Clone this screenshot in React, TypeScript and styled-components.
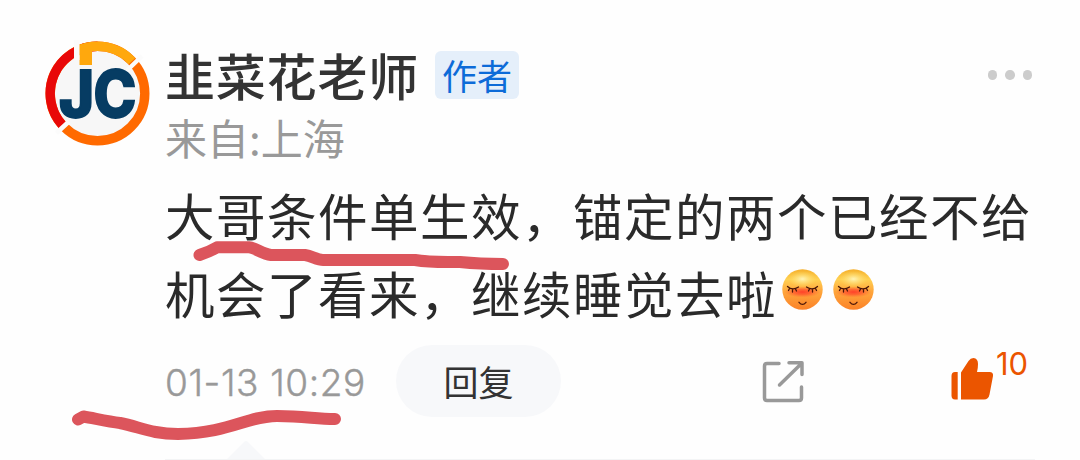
import React from "react";
import styled, { createGlobalStyle } from "styled-components";

const GlobalStyle = createGlobalStyle`
  *, *::before, *::after { box-sizing: border-box; }
  body { margin: 0; background: #fefefe; }
`;

const cjk = `"Noto Sans CJK SC", "Noto Sans", sans-serif`;

const Page = styled.main`
  position: relative;
  width: 1080px;
  height: 460px;
  overflow: hidden;
  display: flex;
  padding: 40px 45px 0 45px;
  background: #fefefe;
  font-family: ${cjk};
`;

const Avatar = styled.svg`
  flex: none;
  width: 106px;
  height: 106px;
  margin-right: 14px;
`;

const Comment = styled.article`
  width: 870px;
  flex: none;
`;

const Header = styled.header`
  display: flex;
  align-items: center;
  height: 70px;
`;

const UserName = styled.h1`
  margin: 0;
  padding-bottom: 2px;
  font-size: 50px;
  letter-spacing: 0.8px;
  line-height: 68px;
  font-weight: 500;
  color: #333;
`;

const AuthorBadge = styled.span`
  width: 84px;
  height: 48px;
  margin-left: 16px;
  border-radius: 6px;
  background: #e5effa;
  color: #0d6bd8;
  font-size: 35px;
  line-height: 47px;
  text-align: center;
`;

const MoreButton = styled.span`
  display: flex;
  gap: 8px;
  margin: 0 3px 0 auto;
`;

const Dot = styled.i`
  width: 9.5px;
  height: 9.5px;
  border-radius: 50%;
  background: #ccc;
`;

const Location = styled.div`
  height: 66px;
  font-size: 42px;
  line-height: 54px;
  color: #999;
`;

const Body = styled.p`
  margin: 0;
  font-size: 49.5px;
  letter-spacing: 1.5px;
  line-height: 78px;
  color: #2a2a2a;
  white-space: nowrap;
`;

const EmojiIcon = styled.svg`
  width: 41px;
  height: 41px;
  margin: 0 5px;
  vertical-align: 4px;
`;

const Footer = styled.footer`
  display: flex;
  align-items: center;
  height: 72px;
  margin-top: 13px;
`;

const Time = styled.time`
  width: 231px;
  padding-top: 3px;
  font-family: Inter, sans-serif;
  font-weight: 300;
  font-size: 37px;
  letter-spacing: 0.6px;
  color: #999;
  -webkit-text-stroke: 0.4px #999;
  white-space: nowrap;
`;

const ReplyButton = styled.button`
  width: 165px;
  height: 72px;
  padding: 0 0 1px;
  border: 0;
  border-radius: 36px;
  background: #f7f8fa;
  color: #333;
  font: 400 35px ${cjk};
`;

const ShareIcon = styled.svg`
  width: 44px;
  height: 44px;
  margin: 2px 0 0 200px;
`;

const Likes = styled.span`
  display: flex;
  align-items: flex-start;
  margin-left: 145px;
  height: 60px;
  color: #eb5500;
`;

const LikeIcon = styled.svg`
  width: 44px;
  height: 44px;
  margin-top: 6px;
`;

const LikeCount = styled.span`
  font: 400 31px/36px Inter, sans-serif;
  margin: -5px 0 0 2px;
`;

const RepliesEdge = styled.div`
  position: relative;
  height: 1px;
  margin-top: 42px;
  background: #f3f4f5;
`;

const RepliesArrow = styled.svg`
  position: absolute;
  left: 62px;
  bottom: 1px;
  width: 38px;
  height: 18px;
`;

const MarkerLayer = styled.svg`
  position: absolute;
  inset: 0;
  width: 1080px;
  height: 460px;
  pointer-events: none;
`;

function Logo() {
  return (
    <Avatar viewBox="45 40 106 106">
      <circle cx="97.5" cy="93.5" r="50" fill="#f7f7f7" />
      <g fill="none" strokeWidth="9.4">
        <circle cx="97.5" cy="93.5" r="47.3" stroke="#ff6a00" />
        <path d="M97.5 46.2A47.3 47.3 0 0 0 62.3 125.100" stroke="#e80808" />
        <path d="M76.500 51.120A47.3 47.3 0 0 1 131.900 61.100" stroke="#ffa80d" />
      </g>
      <path d="M79.500 44.700L92 42V65H79.500z" fill="#ffa80d" />
      <g stroke="#fbfbfb">
        <path d="M76.750 39V60" strokeWidth="5.500" />
        <path d="M142 56L127 70.500M56.500 133L69 121.500" strokeWidth="4.500" />
      </g>
      <g
        fill="#063c63"
        stroke="#063c63"
        strokeWidth="1.800"
        fontFamily="Inter, sans-serif"
        fontWeight="800"
        fontSize="64"
      >
        <text transform="translate(59 116.500) scale(.93 1)">J</text>
        <text transform="translate(93.500 116.500) scale(.9 1)">C</text>
      </g>
    </Avatar>
  );
}

function ShyFace({ id }: { id: string }) {
  return (
    <EmojiIcon viewBox="0 0 41 41">
      <defs>
        <linearGradient id={`${id}-skin`} x1="0" y1="0" x2="0" y2="1">
          <stop offset="0" stopColor="#f5b02c" />
          <stop offset=".25" stopColor="#ffd152" />
          <stop offset=".55" stopColor="#ffa63c" />
          <stop offset="1" stopColor="#fb8228" />
        </linearGradient>
        <radialGradient id={`${id}-shine`}>
          <stop offset="0" stopColor="#fff3b8" />
          <stop offset="1" stopColor="#ffe06a" stopOpacity="0" />
        </radialGradient>
        <radialGradient id={`${id}-blush`}>
          <stop offset="0" stopColor="#ff3c28" stopOpacity=".95" />
          <stop offset=".5" stopColor="#ff4a2c" stopOpacity=".65" />
          <stop offset="1" stopColor="#ff6432" stopOpacity="0" />
        </radialGradient>
      </defs>
      <circle cx="20.5" cy="20.5" r="20.2" fill={`url(#${id}-skin)`} />
      <ellipse cx="20.5" cy="10" rx="14" ry="8" fill={`url(#${id}-shine)`} />
      <ellipse cx="20.5" cy="23" rx="18" ry="5.5" fill={`url(#${id}-blush)`} />
      <g fill="none" stroke="#4a1608" strokeWidth="1.3" strokeLinecap="round">
        <path d="M5.500 17.500Q10.500 22 16.500 18M7.500 19.500L6.500 21.500M10.500 20.500V23M13.500 20L14.500 22" />
        <path d="M24.500 18Q30.500 22 35.500 17.500M27.500 20L26.500 22M30.500 20.500V23M33.500 19.500L34.500 21.500" />
        <path d="M17 33.300Q20.500 37.500 24 33.300" />
      </g>
    </EmojiIcon>
  );
}

export default function App() {
  return (
    <>
      <GlobalStyle />
      <Page>
        <Logo />
        <Comment>
          <Header>
            <UserName>韭菜花老师</UserName>
            <AuthorBadge>作者</AuthorBadge>
            <MoreButton>
              <Dot />
              <Dot />
              <Dot />
            </MoreButton>
          </Header>
          <Location>来自:上海</Location>
          <Body>
            大哥条件单生效，锚定的两个已经不给
            <br />
            机会了看来，继续睡觉去啦
            <ShyFace id="face-a" />
            <ShyFace id="face-b" />
          </Body>
          <Footer>
            <Time>01-13 10:29</Time>
            <ReplyButton>回复</ReplyButton>
            <ShareIcon viewBox="761 360 44 44" fill="none" stroke="#999" strokeWidth="3.5" strokeLinecap="round" strokeLinejoin="round">
              <path d="M779 363.500H767Q764.500 363.500 764.500 366V398Q764.500 400.500 767 400.500H799Q801.500 400.500 801.500 398V387" />
              <path d="M789 362.700H802V374.500M801.500 363.500L779.500 385" />
            </ShareIcon>
            <Likes>
              <LikeIcon viewBox="950 357 44 44" fill="currentColor">
                <path d="M957.700 372V399.500H955Q951.500 399.500 951.500 395.500V376Q951.500 372 955 372z" />
                <path d="M961 399.500V372.500L968.500 361Q970.500 358 973.500 358Q978 358.500 978 364Q978 368 977 372H989.500Q993.500 372 993 376L989.500 394.500Q988.500 399.500 984 399.500z" />
              </LikeIcon>
              <LikeCount>10</LikeCount>
            </Likes>
          </Footer>
          <RepliesEdge>
            <RepliesArrow viewBox="0 0 38 18">
              <path d="M0 18L17 1Q19 -1 21 1L38 18z" fill="#f7f8fa" />
            </RepliesArrow>
          </RepliesEdge>
        </Comment>
        <MarkerLayer viewBox="0 0 1080 460" fill="none" stroke="#dc555c" strokeWidth="12" strokeLinecap="round" strokeLinejoin="round">
          <path d="M199.500 255Q210 251.500 217 247.300H249C256 248 262 254 271 255H305C312 256 317 260 323 260H415C430 262.500 435 262 460 262Q480 264 503 264" />
          <path d="M78 419.500L83.500 416.500C95 418.500 108 421.500 120 423C140 427 152 434 178 434C230 433 247 416 277 416C305 416 315 419 335 419" />
        </MarkerLayer>
      </Page>
    </>
  );
}
